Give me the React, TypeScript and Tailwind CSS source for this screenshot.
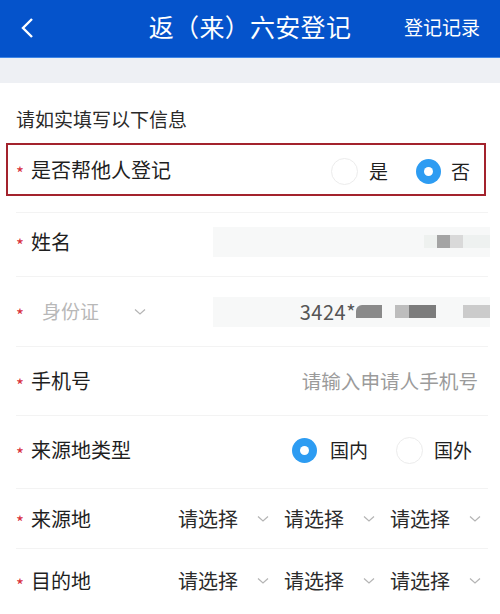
import React from 'react';

const font = { fontFamily: '"Noto Sans CJK SC", "Noto Sans", sans-serif' };

const Star = () => (
  <span className="w-[15px] shrink-0 text-[#d8313d] text-[17px] leading-none translate-y-[3px]">*</span>
);

const Radio = ({ checked }: { checked?: boolean }) =>
  checked ? (
    <span className="w-[25px] h-[25px] shrink-0 rounded-full bg-[#2d9cf2] flex items-center justify-center">
      <span className="w-[9px] h-[9px] rounded-full bg-white" />
    </span>
  ) : (
    <span className="block w-[27px] h-[27px] shrink-0 rounded-full border border-[#ececec]" />
  );

const Chevron = () => (
  <svg width="12" height="8" viewBox="0 0 12 8" fill="none" className="shrink-0">
    <path d="M1 1.5 L6 6 L11 1.5" stroke="#b4b4b4" strokeWidth="1.2" />
  </svg>
);

const Picker = ({ last }: { last?: boolean }) => (
  <div className={last ? 'flex items-center shrink-0' : 'flex items-center shrink-0 w-[106px]'}>
    <span className="w-[79px] text-[20px] text-[#2b2b2b]">请选择</span>
    <Chevron />
  </div>
);

export default function App() {
  return (
    <div style={font} className="w-[500px] h-[614px] bg-white overflow-hidden">
      <div className="h-[58px] bg-[#0553cb] grid grid-cols-[1fr_auto_1fr] items-center border-b border-[#3f86e6]">
        <div className="pl-[20px] pb-[2px]">
          <svg width="16" height="22" viewBox="0 0 16 22" fill="none">
            <path d="M12 2 L3 11 L12 20" stroke="white" strokeWidth="2.4" />
          </svg>
        </div>
        <div className="text-white text-[25px] pb-[3px] tracking-[0.3px]">返（来）六安登记</div>
        <div className="text-white text-[19px] text-right pr-[20px] pb-[2px]">登记记录</div>
      </div>
      <div className="h-[25px] bg-[#eef0f4]" />

      <div className="pl-[16px] mt-[23px] text-[19px] leading-[26px] text-[#2a2a2a]">请如实填写以下信息</div>

      <div className="ml-[6px] mt-[11px] w-[480px] h-[53px] border-2 border-[#a3232d] flex items-center pl-[8px] pr-[14px]">
        <Star />
        <span className="text-[20px] text-[#1f1f1f]">是否帮他人登记</span>
        <div className="ml-auto flex items-center translate-y-[2px]">
          <Radio />
          <span className="ml-[11px] text-[19px] text-[#1f1f1f]">是</span>
          <span className="ml-[28px]"><Radio checked /></span>
          <span className="ml-[10px] text-[19px] text-[#1f1f1f]">否</span>
        </div>
      </div>

      <div className="ml-[16px] mr-[12px]">
        <div className="h-[17px] border-b border-[#f3f3f3]" />

        <div className="h-[64px] flex items-center pb-[6px] border-b border-[#f3f3f3]">
          <Star />
          <span className="text-[20px] text-[#1f1f1f]">姓名</span>
          <div className="ml-auto w-[277px] h-[30px] bg-[#f7f8f8] flex items-center justify-end -mr-[2px]">
            <span className="w-[13px] h-[13px] bg-[#eef1ef]" />
            <span className="w-[13px] h-[13px] bg-[#a4a4a4]" />
            <span className="w-[13px] h-[13px] bg-[#d9d9d9]" />
            <span className="w-[27px] h-[13px] bg-[#eef1f0]" />
          </div>
        </div>

        <div className="h-[70px] flex items-center border-b border-[#f3f3f3]">
          <Star />
          <span className="ml-[11px] text-[19px] text-[#b8b8b8]">身份证</span>
          <span className="ml-[35px] flex"><Chevron /></span>
          <div className="ml-auto w-[277px] h-[30px] bg-[#f7f8f8] flex items-center justify-end -mr-[2px]">
            <span className="text-[20px] text-[#555] tracking-[0.5px]">3424*</span>
            <span className="w-[26px] h-[13px] bg-[#8a8a8a] rounded-tl-[6px]" />
            <span className="w-[13px] h-[13px]" />
            <span className="w-[14px] h-[13px] bg-[#bdbdbd]" />
            <span className="w-[27px] h-[13px] bg-[#7c7c7c]" />
            <span className="w-[27px] h-[13px]" />
            <span className="w-[27px] h-[13px] bg-[#cbcbcb]" />
          </div>
        </div>

        <div className="h-[69px] flex items-center border-b border-[#f3f3f3]">
          <Star />
          <span className="text-[20px] text-[#1f1f1f]">手机号</span>
          <span className="ml-auto pr-[10px] text-[19.6px] text-[#9b9b9b]">请输入申请人手机号</span>
        </div>

        <div className="h-[73px] flex items-center pb-[4px] border-b border-[#f3f3f3]">
          <Star />
          <span className="text-[20px] text-[#1f1f1f]">来源地类型</span>
          <div className="ml-auto flex items-center pr-[16px]">
            <Radio checked />
            <span className="ml-[13px] text-[19px] text-[#1f1f1f]">国内</span>
            <span className="ml-[28px] flex"><Radio /></span>
            <span className="ml-[11px] text-[19px] text-[#1f1f1f]">国外</span>
          </div>
        </div>

        <div className="h-[60px] flex items-center border-b border-[#f3f3f3]">
          <Star />
          <span className="w-[147px] shrink-0 text-[20px] text-[#1f1f1f]">来源地</span>
          <Picker />
          <Picker />
          <Picker last />
        </div>

        <div className="h-[64px] flex items-center">
          <Star />
          <span className="w-[147px] shrink-0 text-[20px] text-[#1f1f1f]">目的地</span>
          <Picker />
          <Picker />
          <Picker last />
        </div>
      </div>
    </div>
  );
}
